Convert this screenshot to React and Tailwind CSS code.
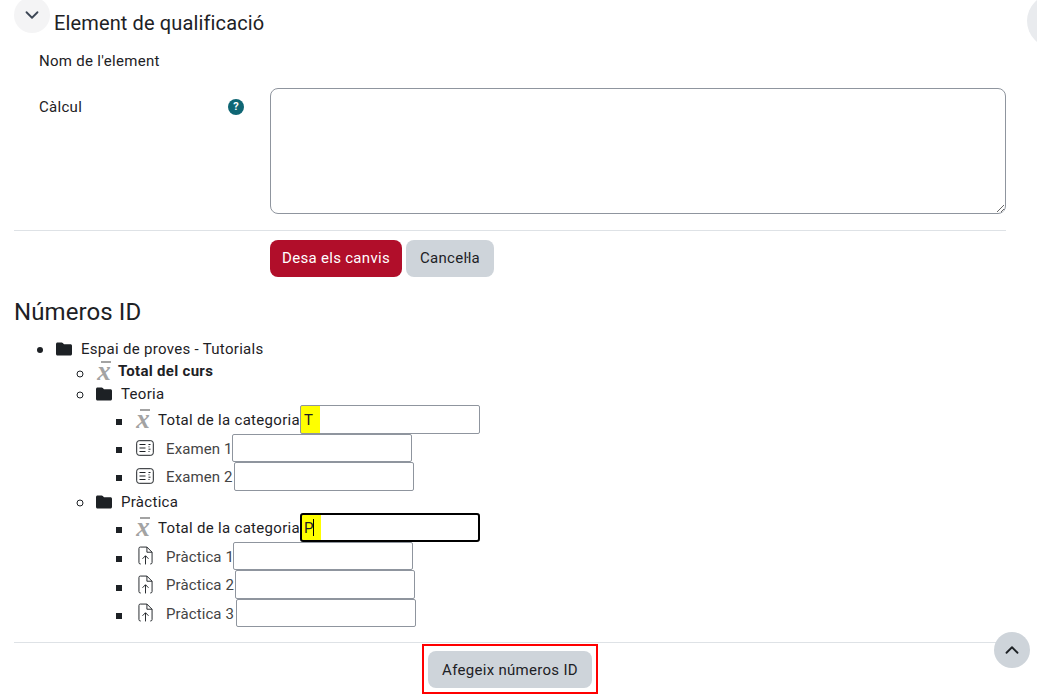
import React from 'react';
import { ChevronDown, ChevronUp } from 'lucide-react';

function FolderIcon() {
  return (
    <svg viewBox="0 0 16 14" className="w-[16px] h-[14px] shrink-0 fill-[#1d2125]">
      <path d="M1.5 0.5h4.2c.4 0 .8.2 1.1.5l1.2 1.3h6.5c.8 0 1.5.7 1.5 1.5v8.2c0 .8-.7 1.5-1.5 1.5h-13c-.8 0-1.5-.7-1.5-1.5v-10c0-.8.7-1.5 1.5-1.5z" />
    </svg>
  );
}

function TotalIcon() {
  return (
    <span className="relative block w-[16px] h-[18px] shrink-0 font-['Liberation_Serif',serif] italic font-bold text-[27px] leading-[18px] tracking-normal text-[#a3a3a3] text-center">
      x
      <span className="absolute left-[5px] -top-[1px] w-[10px] h-[2px] bg-[#a3a3a3]" />
    </span>
  );
}

function QuizIcon() {
  return (
    <svg viewBox="0 0 18 16" className="w-[18px] h-[16px] shrink-0 fill-none stroke-[#1d2125]">
      <rect x="0.7" y="0.7" width="16.6" height="14.6" rx="2.5" />
      <path d="M3.5 4.5h6M3.5 8h6M3.5 11.5h6" />
      <path d="M12.5 4.5h2M12.5 6.8h1M12.5 9.2h2M12.5 11.5h1" />
    </svg>
  );
}

function AssignIcon() {
  return (
    <svg viewBox="0 0 16 20" className="w-[15px] h-[19px] shrink-0 fill-none stroke-[#1d2125]">
      <path d="M3 19H2.5A1.5 1.5 0 0 1 1 17.5V2.5A1.5 1.5 0 0 1 2.5 1H9.5L15 6.5V17.5A1.5 1.5 0 0 1 13.5 19H13" />
      <path d="M9.5 1V6.5H15" />
      <path d="M8 19.5V10.5M4.8 13.5L8 10.2L11.2 13.5" />
    </svg>
  );
}

function ItemRow({ icon, label, labelWidth }) {
  return (
    <li>
      <div className="flex items-center h-[28.5px]">
        <span className="w-[18px] flex justify-center shrink-0 ml-[1px] mr-[12px]">{icon}</span>
        <span className={`text-[#444] whitespace-nowrap tracking-[0.1px] pt-[2px] ${labelWidth}`}>{label}</span>
        <input type="text" className="w-[180px] h-[28.5px] border border-[#8f959e] rounded-[2px] px-[3px] bg-white" />
      </div>
    </li>
  );
}

function TotalRow({ value }) {
  return (
    <li>
      <div className="flex items-center h-[28.5px]">
        <span className="mr-[7px] flex"><TotalIcon /></span>
        <span className="pt-[2px]">Total de la categoria</span>
        <input
          type="text"
          defaultValue={value}
          className="w-[180px] h-[28.5px] border border-[#8f959e] rounded-[2px] px-[3px] pt-[1px] bg-[linear-gradient(#ffff00,#ffff00)] bg-no-repeat bg-[length:19px_100%]"
        />
      </div>
    </li>
  );
}

function FocusedTotalRow({ value }) {
  return (
    <li>
      <div className="flex items-center h-[28.5px]">
        <span className="mr-[7px] flex"><TotalIcon /></span>
        <span className="pt-[2px]">Total de la categoria</span>
        <div className="relative">
          <input
            type="text"
            defaultValue={value}
            className="block w-[180px] h-[28.5px] border-2 border-black rounded-[3px] px-[2px] pt-[1px] bg-[linear-gradient(#ffff00,#ffff00)] bg-no-repeat bg-[length:19px_100%]"
          />
          <span className="absolute left-[13px] top-[6px] w-px h-[17px] bg-black" />
        </div>
      </div>
    </li>
  );
}

export default function App() {
  return (
    <div className="relative w-[1037px] h-[695px] overflow-hidden bg-white pl-[14px] pr-[31px] font-['Roboto',sans-serif] text-[15px] leading-[22.5px] tracking-[0.3px] text-[#1d2125]">
      <div className="flex items-start -mt-[3px] h-[54px]">
        <button className="w-[36px] h-[36px] rounded-full bg-[#f4f4f5] flex items-center justify-center text-[#3c4654]">
          <ChevronDown size={22} strokeWidth={2} />
        </button>
        <h3 className="ml-[4px] mt-[11px] text-[20px] leading-[30px] tracking-[0.13px]">Element de qualificació</h3>
      </div>

      <div className="pl-[25px] mt-[-1px] h-[22.5px]">Nom de l'element</div>

      <div className="flex mt-[15px]">
        <div className="w-[256px] pl-[25px] pt-[8px] flex justify-between pr-[26px] shrink-0">
          <span>Càlcul</span>
          <span className="mt-[3px] w-[16px] h-[16px] rounded-full bg-[#0f6674] text-white text-[11px] leading-[16px] font-bold text-center tracking-normal">?</span>
        </div>
        <textarea className="block flex-1 h-[126px] border border-[#8f959e] rounded-[8px] resize-y bg-white" />
      </div>

      <div className="mt-[16px] border-t border-[#dee2e6] pt-[9px] pl-[256px] flex gap-[4px]">
        <button className="h-[37px] w-[132px] pt-[1px] rounded-[8px] bg-[#b10e2a] text-white">Desa els canvis</button>
        <button className="h-[37px] w-[88px] pt-[1px] rounded-[8px] bg-[#ced4da]">Cancel<span className="-mx-[2px]">·</span>la</button>
      </div>

      <h3 className="mt-[20px] text-[24px] leading-[30px] tracking-[0.1px]">Números ID</h3>

      <ul className="mt-[11px] pl-[42px] list-disc marker:text-[19px]">
        <li>
          <div className="flex items-center gap-[9px]"><FolderIcon /><span>Espai de proves - Tutorials</span></div>
          <ul className="pl-[40px] list-[circle]">
            <li>
              <div className="flex items-center gap-[6px]"><TotalIcon /><b className="font-bold">Total del curs</b></div>
            </li>
            <li>
              <div className="flex items-center gap-[9px]"><FolderIcon /><span>Teoria</span></div>
              <ul className="pl-[39px] list-[square]">
                <TotalRow value="T" />
                <ItemRow icon={<QuizIcon />} label="Examen 1" labelWidth="w-[66px]" />
                <ItemRow icon={<QuizIcon />} label="Examen 2" labelWidth="w-[68px]" />
              </ul>
            </li>
            <li>
              <div className="flex items-center gap-[9px]"><FolderIcon /><span>Pràctica</span></div>
              <ul className="pl-[39px] list-[square]">
                <FocusedTotalRow value="P" />
                <ItemRow icon={<AssignIcon />} label="Pràctica 1" labelWidth="w-[67px]" />
                <ItemRow icon={<AssignIcon />} label="Pràctica 2" labelWidth="w-[69px]" />
                <ItemRow icon={<AssignIcon />} label="Pràctica 3" labelWidth="w-[70px]" />
              </ul>
            </li>
          </ul>
        </li>
      </ul>

      <div className="mt-[15px] border-t border-[#dee2e6] pt-[1px] flex justify-center">
        <div className="border-2 border-[#ff0000] p-[4px] pt-[5px]">
          <button className="block h-[37px] w-[164px] pt-[1px] rounded-[8px] bg-[#ced4da]">Afegeix números ID</button>
        </div>
      </div>

      <button className="absolute left-[994px] top-[632px] w-[36px] h-[36px] rounded-full bg-[#ced4da] flex items-center justify-center">
        <ChevronUp size={22} strokeWidth={2} />
      </button>
      <div className="absolute left-[1027px] -top-[6px] w-[54px] h-[54px] rounded-full bg-[#e9ebee]" />
    </div>
  );
}
